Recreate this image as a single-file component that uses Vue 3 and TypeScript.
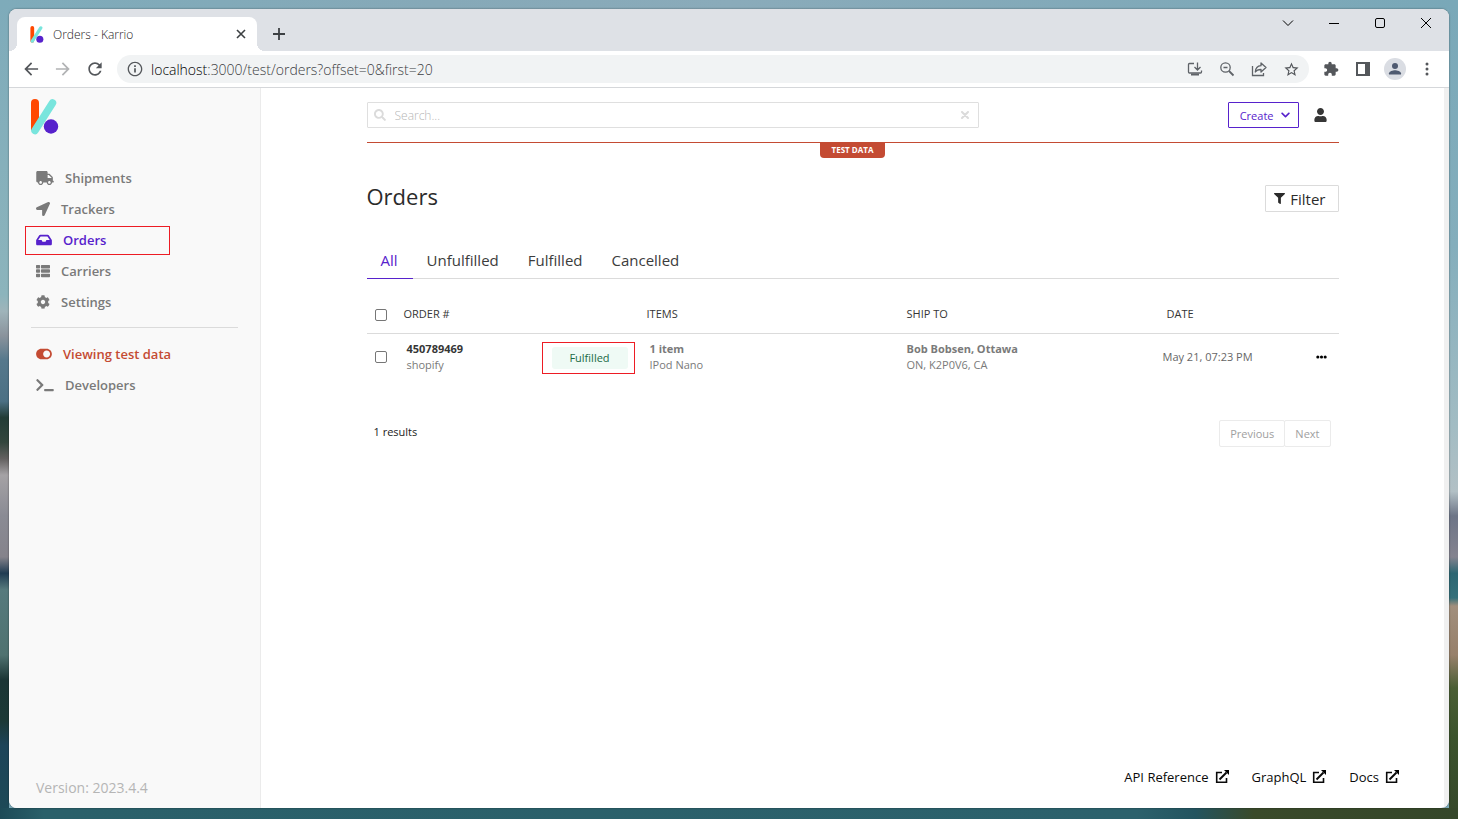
<script setup lang="ts">
import { ref } from 'vue'

interface Glyph {
  box: string
  path: string
}

interface NavItem {
  label: string
  icon: string
  width: number
  active?: boolean
  danger?: boolean
}

interface Order {
  id: string
  source: string
  status: string
  items: string
  product: string
  recipient: string
  address: string
  date: string
}

const glyphs: Record<string, Glyph> = {
  truck: {
    box: '0 0 640 512',
    path: 'M624 352h-16V243.9c0-12.7-5.1-24.9-14.1-33.9L494 110.1c-9-9-21.2-14.1-33.9-14.1H416V48c0-26.5-21.5-48-48-48H48C21.5 0 0 21.5 0 48v320c0 26.5 21.5 48 48 48h16c0 53 43 96 96 96s96-43 96-96h128c0 53 43 96 96 96s96-43 96-96h48c8.8 0 16-7.2 16-16v-32c0-8.8-7.2-16-16-16zM160 464c-26.5 0-48-21.5-48-48s21.5-48 48-48 48 21.5 48 48-21.5 48-48 48zm320 0c-26.5 0-48-21.5-48-48s21.5-48 48-48 48 21.5 48 48-21.5 48-48 48zm80-208H416V144h44.1l99.9 99.9V256z',
  },
  arrow: {
    box: '0 0 512 512',
    path: 'M444.52 3.52L28.74 195.42c-47.97 22.39-31.98 92.75 19.19 92.75h175.91v175.91c0 51.17 70.36 67.17 92.75 19.19l191.9-415.78c15.99-38.39-25.59-79.97-63.97-63.97z',
  },
  inbox: {
    box: '0 0 576 512',
    path: 'M567.938 243.908L462.25 85.374A48.003 48.003 0 0 0 422.311 64H153.689a48 48 0 0 0-39.938 21.374L8.062 243.908A47.994 47.994 0 0 0 0 270.533V400c0 26.51 21.49 48 48 48h480c26.51 0 48-21.49 48-48V270.533a47.994 47.994 0 0 0-8.062-26.625zM162.252 128h251.497l85.333 128H376l-32 64H232l-32-64H76.918l85.334-128z',
  },
  list: {
    box: '0 0 512 512',
    path: 'M149.333 216v80c0 13.255-10.745 24-24 24H24c-13.255 0-24-10.745-24-24v-80c0-13.255 10.745-24 24-24h101.333c13.255 0 24 10.745 24 24zM0 376v80c0 13.255 10.745 24 24 24h101.333c13.255 0 24-10.745 24-24v-80c0-13.255-10.745-24-24-24H24c-13.255 0-24 10.745-24 24zM125.333 32H24C10.745 32 0 42.745 0 56v80c0 13.255 10.745 24 24 24h101.333c13.255 0 24-10.745 24-24V56c0-13.255-10.745-24-24-24zm80 448H488c13.255 0 24-10.745 24-24v-80c0-13.255-10.745-24-24-24H205.333c-13.255 0-24 10.745-24 24v80c0 13.255 10.745 24 24 24zm-24-424v80c0 13.255 10.745 24 24 24H488c13.255 0 24-10.745 24-24V56c0-13.255-10.745-24-24-24H205.333c-13.255 0-24 10.745-24 24zm24 264H488c13.255 0 24-10.745 24-24v-80c0-13.255-10.745-24-24-24H205.333c-13.255 0-24 10.745-24 24v80c0 13.255 10.745 24 24 24z',
  },
  cog: {
    box: '0 0 512 512',
    path: 'M487.4 315.7l-42.6-24.6c4.3-23.2 4.3-47 0-70.2l42.6-24.6c4.9-2.8 7.1-8.6 5.5-14-11.1-35.6-30-67.8-54.7-94.6-3.8-4.1-10-5.1-14.8-2.3L380.8 110c-17.9-15.4-38.5-27.3-60.8-35.1V25.8c0-5.6-3.9-10.5-9.4-11.7-36.7-8.2-74.3-7.8-109.2 0-5.5 1.2-9.4 6.1-9.4 11.7V75c-22.2 7.9-42.8 19.8-60.8 35.1L88.7 85.5c-4.9-2.8-11-1.9-14.8 2.3-24.7 26.7-43.6 58.9-54.7 94.6-1.7 5.4.6 11.2 5.5 14L67.3 221c-4.3 23.2-4.3 47 0 70.2l-42.6 24.6c-4.9 2.8-7.1 8.6-5.5 14 11.1 35.6 30 67.8 54.7 94.6 3.8 4.1 10 5.1 14.8 2.3l42.6-24.6c17.9 15.4 38.5 27.3 60.8 35.1v49.2c0 5.6 3.9 10.5 9.4 11.7 36.7 8.2 74.3 7.8 109.2 0 5.5-1.2 9.4-6.1 9.4-11.7v-49.2c22.2-7.9 42.8-19.8 60.8-35.1l42.6 24.6c4.9 2.8 11 1.9 14.8-2.3 24.7-26.7 43.6-58.9 54.7-94.6 1.5-5.5-.7-11.3-5.6-14.1zM256 336c-44.1 0-80-35.9-80-80s35.9-80 80-80 80 35.9 80 80-35.9 80-80 80z',
  },
  toggle: {
    box: '0 0 576 512',
    path: 'M384 64H192C86 64 0 150 0 256s86 192 192 192h192c106 0 192-86 192-192S490 64 384 64zm0 320c-70.8 0-128-57.3-128-128 0-70.8 57.3-128 128-128 70.8 0 128 57.3 128 128 0 70.8-57.3 128-128 128z',
  },
  terminal: {
    box: '0 0 640 512',
    path: 'M257.981 272.971L63.638 467.314c-9.373 9.373-24.569 9.373-33.941 0L7.029 444.647c-9.357-9.357-9.375-24.522-.04-33.901L161.011 256 6.99 101.255c-9.335-9.379-9.317-24.544.04-33.901l22.667-22.667c9.373-9.373 24.569-9.373 33.941 0L257.981 239.03c9.373 9.372 9.373 24.568 0 33.941zM640 456v-32c0-13.255-10.745-24-24-24H312c-13.255 0-24 10.745-24 24v32c0 13.255 10.745 24 24 24h304c13.255 0 24-10.745 24-24z',
  },
}

const mainNav: NavItem[] = [
  { label: 'Shipments', icon: 'truck', width: 18 },
  { label: 'Trackers', icon: 'arrow', width: 14 },
  { label: 'Orders', icon: 'inbox', width: 16, active: true },
  { label: 'Carriers', icon: 'list', width: 14 },
  { label: 'Settings', icon: 'cog', width: 14 },
]

const extraNav: NavItem[] = [
  { label: 'Viewing test data', icon: 'toggle', width: 16, danger: true },
  { label: 'Developers', icon: 'terminal', width: 18 },
]

const tabs = ['All', 'Unfulfilled', 'Fulfilled', 'Cancelled']
const activeTab = ref('All')
const search = ref('')

const orders: Order[] = [
  {
    id: '450789469',
    source: 'shopify',
    status: 'Fulfilled',
    items: '1 item',
    product: 'IPod Nano',
    recipient: 'Bob Bobsen, Ottawa',
    address: 'ON, K2P0V6, CA',
    date: 'May 21, 07:23 PM',
  },
]

const footerLinks = ['API Reference', 'GraphQL', 'Docs']
</script>

<template>
  <div class="desktop">
    <div class="window">
      <div class="tabstrip">
        <div class="tab">
          <svg class="favicon" viewBox="0 0 28 36">
            <path d="M4 4v27" stroke="#ff4800" stroke-width="8" stroke-linecap="round" />
            <path d="M22 4L4 32" stroke="#79e5dd" stroke-width="7" stroke-linecap="round" />
            <circle cx="20" cy="28" r="7.5" fill="#5722cc" />
          </svg>
          <span class="tab-title">Orders - Karrio</span>
          <button class="tab-close" aria-label="Close tab">
            <svg viewBox="0 0 10 10"><path d="M1 1l8 8M9 1L1 9" stroke="#3c4043" stroke-width="1.6" /></svg>
          </button>
        </div>
        <button class="new-tab" aria-label="New tab">
          <svg viewBox="0 0 12 12"><path d="M6 0v12M0 6h12" stroke="#3c4043" stroke-width="1.8" /></svg>
        </button>
        <div class="controls">
          <button aria-label="Search tabs"><svg viewBox="0 0 12 12"><path d="M1 3.500l5 5 5-5" /></svg></button>
          <button aria-label="Minimize"><svg viewBox="0 0 12 12"><path d="M1 6.500h10" /></svg></button>
          <button aria-label="Maximize"><svg viewBox="0 0 12 12"><rect x="1.500" y="1.500" width="9" height="9" rx="1.500" /></svg></button>
          <button aria-label="Close"><svg viewBox="0 0 12 12"><path d="M1 1l10 10M11 1L1 11" /></svg></button>
        </div>
      </div>

      <div class="toolbar">
        <button class="tool" aria-label="Back">
          <svg width="20" height="20" viewBox="0 0 24 24"><path d="M20.500 11H7.830l5.590-5.590L12 4l-8 8 8 8 1.410-1.410L7.830 13H20.500v-2z" /></svg>
        </button>
        <button class="tool faded" aria-label="Forward">
          <svg width="20" height="20" viewBox="0 0 24 24"><path d="M3.500 13h12.670l-5.590 5.590L12 20l8-8-8-8-1.410 1.410L16.170 11H3.500v2z" /></svg>
        </button>
        <button class="tool" aria-label="Reload">
          <svg width="20" height="20" viewBox="0 0 24 24"><path d="M17.650 6.350C16.200 4.900 14.210 4 12 4c-4.420 0-7.990 3.580-7.990 8s3.570 8 7.990 8c3.730 0 6.840-2.550 7.730-6h-2.080c-.82 2.330-3.040 4-5.650 4-3.310 0-6-2.690-6-6s2.690-6 6-6c1.660 0 3.140.69 4.220 1.780L13 11h7V4l-2.350 2.350z" /></svg>
        </button>
        <div class="address">
          <svg width="16" height="16" viewBox="0 0 24 24"><path d="M10.700 6.500h2.600v2.600h-2.600zm0 4.300h2.600v6.500h-2.600zM12 1C5.900 1 1 5.900 1 12s4.900 11 11 11 11-4.900 11-11S18.100 1 12 1zm0 20c-5 0-9-4-9-9s4-9 9-9 9 4 9 9-4 9-9 9z" /></svg>
          <div class="url" role="textbox" aria-label="Address"><span class="host">localhost</span>:3000/test/orders?offset=0&amp;first=20</div>
          <button class="tool" aria-label="Install app">
            <svg class="line" width="16" height="16" viewBox="0 0 16 16"><path d="M7 2.500H2.500a1 1 0 0 0-1 1v7.500a1 1 0 0 0 1 1h11a1 1 0 0 0 1-1V9.500M10.500 1.500v7M7.500 6l3 3 3-3" /><path d="M4 13.500h8" stroke-width="2" /></svg>
          </button>
          <button class="tool" aria-label="Zoom">
            <svg class="line" width="16" height="16" viewBox="0 0 16 16"><circle cx="6.500" cy="6.500" r="4.700" /><path d="M10 10l4.500 4.500" stroke-width="1.800" /><path d="M4.500 6.500h4" /></svg>
          </button>
          <button class="tool" aria-label="Share">
            <svg class="line" width="16" height="16" viewBox="0 0 16 16"><path d="M1.500 5v9.500h11V12" /><path d="M10 2l5 4.500-5 4.500V8.500c-2.800 0-4.600.8-5.700 2.500.2-3.600 2.200-6 5.700-6.300z" stroke-linejoin="round" /></svg>
          </button>
          <button class="tool" aria-label="Bookmark">
            <svg width="17" height="17" viewBox="0 0 24 24"><path d="M22 9.240l-7.190-.62L12 2 9.190 8.630 2 9.240l5.460 4.730L5.820 21 12 17.270 18.180 21l-1.630-7.030L22 9.240zM12 15.400l-3.760 2.270 1-4.280-3.320-2.880 4.380-.38L12 6.100l1.710 4.040 4.380.38-3.320 2.880 1 4.280L12 15.400z" /></svg>
          </button>
        </div>
        <button class="tool" aria-label="Extensions">
          <svg width="16" height="16" viewBox="0 0 24 24"><path d="M20.500 11H19V7c0-1.100-.9-2-2-2h-4V3.500C13 2.120 11.880 1 10.500 1S8 2.120 8 3.500V5H4c-1.100 0-1.990.9-1.990 2v3.800H3.500c1.490 0 2.700 1.210 2.700 2.700s-1.210 2.700-2.700 2.700H2V20c0 1.100.9 2 2 2h3.800v-1.500c0-1.490 1.210-2.700 2.700-2.700 1.490 0 2.700 1.210 2.700 2.700V22H17c1.100 0 2-.9 2-2v-4h1.500c1.380 0 2.500-1.120 2.500-2.500S21.880 11 20.500 11z" /></svg>
        </button>
        <button class="tool" aria-label="Side panel">
          <svg width="14" height="14" viewBox="0 0 14 14"><path fill-rule="evenodd" d="M0 0h14v14H0zM2 2v10h7V2z" /></svg>
        </button>
        <button class="tool" aria-label="Profile">
          <svg width="22" height="22" viewBox="0 0 22 22"><circle cx="11" cy="11" r="11" fill="#dadde3" /><circle cx="11" cy="8" r="3" fill="#4e5a70" /><path d="M5 16.500v-1.200c0-2 4-3.100 6-3.100s6 1.100 6 3.100v1.200z" fill="#4e5a70" /></svg>
        </button>
        <button class="tool" aria-label="Menu">
          <svg width="16" height="16" viewBox="0 0 16 16"><circle cx="8" cy="3" r="1.500" /><circle cx="8" cy="8" r="1.500" /><circle cx="8" cy="13" r="1.500" /></svg>
        </button>
      </div>

      <div class="page">
        <aside class="sidebar">
          <svg class="logo" viewBox="0 0 28 36">
            <path d="M0 31V4a4 4 0 0 1 8 0v20L4 32z" fill="#ff4800" />
            <path d="M21.500 4L4 31.500" stroke="#79e5dd" stroke-width="7.500" stroke-linecap="round" />
            <circle cx="20" cy="27.500" r="7.200" fill="#5722cc" />
          </svg>
          <nav class="nav main-nav">
            <a v-for="item in mainNav" :key="item.label" href="#" :class="{ active: item.active }">
              <svg :width="item.width" height="14" :viewBox="glyphs[item.icon].box"><path :d="glyphs[item.icon].path" /></svg>
              <span>{{ item.label }}</span>
              <i v-if="item.active" class="marker nav-marker"></i>
            </a>
          </nav>
          <hr />
          <nav class="nav">
            <a v-for="item in extraNav" :key="item.label" href="#" :class="{ danger: item.danger }">
              <svg :width="item.width" height="14" :viewBox="glyphs[item.icon].box"><path :d="glyphs[item.icon].path" /></svg>
              <span>{{ item.label }}</span>
            </a>
          </nav>
          <p class="version">Version: 2023.4.4</p>
        </aside>

        <main class="main">
          <div class="content">
            <header class="topbar">
              <label class="search">
                <svg width="12" height="12" viewBox="0 0 512 512"><path d="M505 442.700L405.300 343c-4.500-4.500-10.600-7-17-7H372c27.600-35.300 44-79.700 44-128C416 93.100 322.900 0 208 0S0 93.100 0 208s93.100 208 208 208c48.300 0 92.700-16.400 128-44v16.300c0 6.400 2.500 12.500 7 17l99.700 99.700c9.400 9.400 24.600 9.400 33.900 0l28.300-28.300c9.400-9.400 9.400-24.600.1-34zM208 336c-70.700 0-128-57.200-128-128 0-70.700 57.200-128 128-128 70.700 0 128 57.200 128 128 0 70.700-57.200 128-128 128z" /></svg>
                <input v-model="search" type="text" placeholder="Search..." aria-label="Search" />
                <button aria-label="Clear search" @click="search = ''">
                  <svg width="8" height="8" viewBox="0 0 8 8"><path d="M1 1l6 6M7 1L1 7" stroke="#dbdbdb" stroke-width="2" stroke-linecap="round" /></svg>
                </button>
              </label>
              <button class="create">
                Create
                <svg width="9" height="10" viewBox="0 0 448 512"><path d="M207.029 381.476L12.686 187.132c-9.373-9.373-9.373-24.569 0-33.941l22.667-22.667c9.357-9.357 24.522-9.375 33.901-.04L224 284.505l154.745-154.021c9.379-9.335 24.544-9.317 33.901.04l22.667 22.667c9.373 9.373 9.373 24.569 0 33.941L240.971 381.476c-9.373 9.372-24.569 9.372-33.942 0z" /></svg>
              </button>
              <button class="account" aria-label="Account">
                <svg width="13" height="14" viewBox="0 0 448 512"><path d="M224 256c70.700 0 128-57.300 128-128S294.700 0 224 0 96 57.300 96 128s57.300 128 128 128zm89.600 32h-16.700c-22.200 10.200-46.900 16-72.900 16s-50.600-5.800-72.900-16h-16.700C60.200 288 0 348.200 0 422.400V464c0 26.500 21.500 48 48 48h352c26.500 0 48-21.500 48-48v-41.600c0-74.200-60.200-134.400-134.400-134.400z" /></svg>
              </button>
            </header>
            <div class="mode"><span>TEST DATA</span></div>

            <div class="heading">
              <h1>Orders</h1>
              <button class="filter">
                <svg width="11" height="11" viewBox="0 0 512 512"><path d="M487.976 0H24.028C2.710 0-8.047 25.866 7.058 40.971L192 225.941V432c0 7.831 3.821 15.170 10.237 19.662l80 55.980C298.020 518.690 320 507.493 320 487.980V225.941l184.947-184.970C520.021 25.896 509.338 0 487.976 0z" /></svg>
                Filter
              </button>
            </div>

            <div class="tabs" role="tablist">
              <button
                v-for="tab in tabs"
                :key="tab"
                role="tab"
                :aria-selected="tab === activeTab"
                :class="{ active: tab === activeTab }"
                @click="activeTab = tab"
              >{{ tab }}</button>
            </div>

            <table>
              <colgroup>
                <col class="c-check" /><col class="c-order" /><col class="c-status" /><col class="c-items" />
                <col class="c-ship" /><col class="c-date" /><col class="c-menu" />
              </colgroup>
              <thead>
                <tr>
                  <th><input type="checkbox" aria-label="Select all orders" /></th>
                  <th>ORDER #</th>
                  <th></th>
                  <th>ITEMS</th>
                  <th>SHIP TO</th>
                  <th class="date-head">DATE</th>
                  <th></th>
                </tr>
              </thead>
              <tbody>
                <tr v-for="order in orders" :key="order.id">
                  <td><input type="checkbox" :aria-label="'Select order ' + order.id" /></td>
                  <td class="inset"><strong class="dark">{{ order.id }}</strong><br />{{ order.source }}</td>
                  <td class="status"><span class="badge">{{ order.status }}<i class="marker badge-marker"></i></span></td>
                  <td class="inset"><strong>{{ order.items }}</strong><br />{{ order.product }}</td>
                  <td><strong>{{ order.recipient }}</strong><br />{{ order.address }}</td>
                  <td class="date">{{ order.date }}</td>
                  <td class="menu">
                    <button aria-label="Order actions">
                      <svg width="11" height="4" viewBox="0 0 12 4"><circle cx="2" cy="2" r="1.700" /><circle cx="6" cy="2" r="1.700" /><circle cx="10" cy="2" r="1.700" /></svg>
                    </button>
                  </td>
                </tr>
              </tbody>
            </table>

            <div class="results">
              <span>{{ orders.length }} results</span>
              <div class="pager">
                <button disabled>Previous</button>
                <button disabled>Next</button>
              </div>
            </div>
          </div>

          <footer class="footer">
            <a v-for="link in footerLinks" :key="link" href="#">
              {{ link }}
              <svg width="14" height="14" viewBox="0 0 14 14"><path d="M7 2.500H1.700v9.800h9.800V8" fill="none" stroke="currentColor" stroke-width="1.600" /><path d="M4.500 9.500L11.500 2.500" stroke="currentColor" stroke-width="1.900" /><path d="M9 0H14v5z" /></svg>
            </a>
          </footer>
        </main>
      </div>
    </div>
  </div>
</template>

<style>
html,
body {
  margin: 0;
}
</style>

<style scoped>
* {
  box-sizing: border-box;
}

button {
  margin: 0;
  padding: 0;
  border: 0;
  background: none;
  font: inherit;
  color: inherit;
}

a {
  color: inherit;
  text-decoration: none;
}

svg {
  display: block;
  flex: none;
}

.desktop {
  height: 100vh;
  min-height: 600px;
  padding: 9px 9px 11px;
  font-family: "Open Sans", "Liberation Sans", sans-serif;
  background:
    linear-gradient(90deg, #1d4a57, #2a606a 3%, #2c616c 78%, #23545f 82%, #3a4a2a 86%, #35472a) bottom / 100% 11px no-repeat,
    linear-gradient(90deg, #7eabba, #86a9b8 30%, #8aabba 50%, #79a8b8) top / 100% 9px no-repeat,
    linear-gradient(#7eabba, #8cb4bc 36%, #9fb4ba 38%, #8a939c 41%, #55788c 44%, #4b7084 49%, #223c36 51%, #33463d 54%, #62605f 56%, #a5a2a5 58%, #8a8b94 63%, #85838b 68%, #203c53 70%, #567a7d 72%, #4f7270 80%, #1b3535 83%, #1c3936 88%, #1d4459 91%, #1d4a57) left / 9px 100% no-repeat,
    linear-gradient(#79a8b8, #84aebc 30%, #a2bcc3 52%, #b2c0c5 60%, #6d7587 63%, #84838f 68%, #2c6672 70%, #35707a 73%, #a18f7d 74%, #97806a 80%, #4a5e34 84%, #3b532c 90%, #35472a) right / 9px 100% no-repeat,
    #7eabba;
}

.window {
  display: flex;
  flex-direction: column;
  height: 100%;
  overflow: hidden;
  border-radius: 8px;
  background: #fff;
  box-shadow: 0 0 2px rgba(0, 0, 0, 0.5);
}

.tabstrip {
  display: flex;
  height: 42px;
  flex: none;
  padding-left: 8px;
  background: #dee1e6;
}

.tab {
  position: relative;
  display: flex;
  align-items: center;
  width: 240px;
  height: 34px;
  margin-top: 8px;
  padding: 0 10px 0 13px;
  border-radius: 8px 8px 0 0;
  background: #fff;
}

.tab::before,
.tab::after {
  content: "";
  position: absolute;
  bottom: 0;
  width: 8px;
  height: 8px;
}

.tab::before {
  left: -8px;
  background: radial-gradient(circle at 0 0, #dee1e6 8px, #fff 8px);
}

.tab::after {
  right: -8px;
  background: radial-gradient(circle at 100% 0, #dee1e6 8px, #fff 8px);
}

.favicon {
  width: 14px;
  height: 17px;
}

.tab-title {
  flex: 1;
  margin-left: 9px;
  font-size: 12px;
  font-weight: 300;
  color: #1f2225;
}

.tab-close {
  padding: 3px 1px;
}

.tab-close svg {
  width: 10px;
  height: 10px;
}

.new-tab {
  align-self: center;
  margin-left: 16px;
  padding-top: 8px;
}

.new-tab svg {
  width: 12px;
  height: 12px;
}

.controls {
  display: flex;
  height: 28px;
  margin-left: auto;
}

.controls button {
  display: grid;
  place-items: center;
  width: 46px;
}

.controls svg {
  width: 12px;
  height: 12px;
  fill: none;
  stroke: #000;
}

.toolbar {
  display: flex;
  align-items: center;
  flex: none;
  height: 37px;
  padding: 0 6px;
  border-bottom: 1px solid #d5d7da;
}

.tool {
  display: grid;
  place-items: center;
  width: 32px;
  height: 28px;
  flex: none;
}

.tool svg,
.address > svg {
  fill: #54575b;
}

.tool .line {
  fill: none;
  stroke: #5f6368;
  stroke-width: 1.300;
}

.faded {
  opacity: 0.45;
}

.address {
  display: flex;
  flex: 1;
  align-items: center;
  height: 28px;
  margin: 0 6px;
  padding: 0 2px 0 10px;
  border-radius: 14px;
  background: #f1f3f4;
}

.url {
  flex: 1;
  margin-left: 8px;
  font-size: 14px;
  font-weight: 300;
  color: #3c4043;
}

.host {
  color: #000;
}

.page {
  display: flex;
  flex: 1;
  min-height: 0;
  border-right: 5px solid #f0f0f0;
}

.sidebar {
  display: flex;
  flex-direction: column;
  width: 252px;
  flex: none;
  padding: 11px 22px 8px;
  border-right: 1px solid #ebebeb;
  background: #f9f9f9;
}

.logo {
  width: 28px;
  height: 36px;
}

.nav {
  padding-left: 5px;
  font-size: 13px;
  font-weight: 600;
  color: #7a7a7a;
}

.main-nav {
  margin-top: 27px;
}

.nav a {
  position: relative;
  display: flex;
  align-items: center;
  gap: 11px;
  height: 31px;
}

.nav svg {
  fill: currentColor;
}

.nav .active {
  color: #5722cc;
}

.nav .danger {
  color: #c44b33;
}

.marker {
  position: absolute;
  border: 1px solid #ed1c24;
  pointer-events: none;
}

.nav-marker {
  top: 2px;
  bottom: 0;
  left: -11px;
  width: 145px;
}

hr {
  width: 100%;
  margin: 10px 0;
  border: 0;
  border-top: 1px solid #dbdbdb;
}

.version {
  margin: auto 0 0 5px;
  font-size: 14px;
  line-height: 24px;
  color: #b5b5b5;
}

.main {
  display: flex;
  flex: 1;
  flex-direction: column;
  min-width: 0;
}

.content {
  width: 100%;
  max-width: 972px;
  margin: 0 auto;
}

.topbar {
  display: flex;
  align-items: center;
  padding: 14px 0;
}

.search {
  display: flex;
  align-items: center;
  flex: 0 1 612px;
  height: 26px;
  padding: 0 9px 0 6px;
  border: 1px solid #dfdfdf;
  border-radius: 1px;
}

.search > svg {
  fill: #dbdbdb;
}

.search input {
  flex: 1;
  min-width: 0;
  margin-left: 9px;
  padding: 0;
  border: 0;
  outline: 0;
  background: none;
  font: 300 12px "Open Sans", sans-serif;
}

.search input::placeholder {
  color: #b5b5b5;
}

.create {
  display: flex;
  align-items: center;
  gap: 7px;
  height: 26px;
  margin-left: auto;
  padding: 0 8px 0 11px;
  border: 1px solid #5722cc;
  border-radius: 1px;
  font-size: 11px;
  font-weight: 500;
  color: #5722cc;
}

.create svg {
  fill: currentColor;
}

.account {
  margin: 0 12px 0 15px;
}

.account svg {
  fill: #363636;
}

.mode {
  display: flex;
  justify-content: center;
  border-top: 1px solid #c44b33;
}

.mode span {
  height: 15px;
  padding: 0 12px;
  border-radius: 0 0 4px 4px;
  background: #c44b33;
  font-size: 8px;
  font-weight: 700;
  line-height: 14px;
  color: #fff;
}

.heading {
  display: flex;
  align-items: flex-end;
  justify-content: space-between;
  margin-top: 22px;
}

h1 {
  margin: 0;
  font-size: 22px;
  font-weight: 500;
  line-height: 32px;
  color: #2b2b2b;
}

.filter {
  display: flex;
  align-items: center;
  gap: 5px;
  height: 27px;
  padding: 0 12px 0 8px;
  border: 1px solid #dbdbdb;
  border-radius: 1px;
  font-size: 15px;
  font-weight: 500;
  color: #2b2b2b;
}

.filter svg {
  fill: currentColor;
}

.tabs {
  display: flex;
  margin-top: 29px;
  border-bottom: 1px solid #dbdbdb;
}

.tabs button {
  height: 38px;
  margin-bottom: -1px;
  padding: 0 15px 0 14px;
  border-bottom: 1px solid transparent;
  font-size: 15px;
  font-weight: 500;
  color: #3c3c3c;
}

.tabs .active {
  border-color: #5722cc;
  color: #5722cc;
}

table {
  width: 100%;
  margin-top: 16px;
  border-collapse: collapse;
  table-layout: fixed;
  font-size: 11px;
  line-height: 16px;
  color: #7a7a7a;
}

.c-check { width: 37px; }
.c-order { width: 138px; }
.c-status { width: 105px; }
.c-items { width: 260px; }
.c-ship { width: 256px; }
.c-date { width: 134px; }

th,
td {
  padding: 0;
  text-align: left;
}

th {
  height: 38px;
  border-bottom: 1px solid #dbdbdb;
  font-weight: 400;
  color: #363636;
}

td {
  height: 48px;
}

td strong {
  font-weight: 700;
}

.dark {
  color: #363636;
}

td.inset {
  padding-left: 3px;
}

th.date-head {
  padding-left: 4px;
}

input[type="checkbox"] {
  display: block;
  width: 12px;
  height: 12px;
  margin: 0 0 0 8px;
  border: 1px solid #767676;
  border-radius: 2px;
  appearance: none;
  background: #fff;
}

th input[type="checkbox"] {
  margin-top: 3px;
}

input[type="checkbox"]:checked {
  background: #5722cc;
}

td.status {
  padding: 2px 0 0 10px;
}

.badge {
  position: relative;
  display: block;
  width: 76px;
  border-radius: 3px;
  background: #effaf5;
  font-weight: 500;
  line-height: 22px;
  text-align: center;
  color: #1b6a45;
}

.badge-marker {
  inset: -5px -7px -5px -10px;
}

.date {
  font-weight: 500;
  color: #666;
}

.menu button {
  display: block;
  margin: 0 12px 0 auto;
}

.results {
  display: flex;
  align-items: flex-start;
  justify-content: space-between;
  margin-top: 39px;
  padding: 0 8px 0 7px;
  font-size: 11px;
  font-weight: 500;
  line-height: 24px;
  color: #222;
}

.pager {
  display: flex;
}

.pager button {
  height: 27px;
  padding: 0 10px;
  border: 1px solid #ebebeb;
  border-radius: 2px;
  font-weight: 400;
  color: #a0a0a0;
}

.pager button + button {
  margin-left: -1px;
}

.footer {
  display: flex;
  justify-content: flex-end;
  gap: 23px;
  margin-top: auto;
  padding: 0 45px 21px;
  font-size: 13px;
  line-height: 20px;
  color: #0a0a0a;
}

.footer a {
  display: flex;
  align-items: center;
  gap: 6px;
}
</style>
